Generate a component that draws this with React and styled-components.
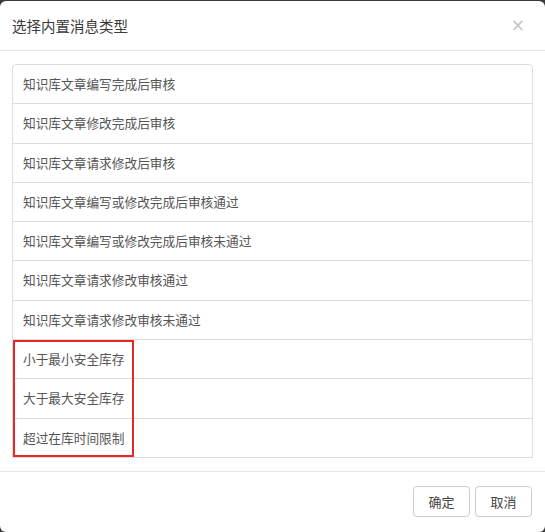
import React from "react";
import styled, { createGlobalStyle } from "styled-components";

const Global = createGlobalStyle`
  html, body { margin: 0; padding: 0; background: #3a3a3a; }
  body { font-family: "Noto Sans CJK SC", "Noto Sans", sans-serif; }
  * { box-sizing: border-box; }
`;

const Modal = styled.div`
  margin-top: 1px;
  width: 545px;
  height: 531px;
  background: #fff;
  border-radius: 6px;
  display: flex;
  flex-direction: column;
  overflow: hidden;
`;

const Header = styled.div`
  height: 50px;
  border-bottom: 1px solid #e5e5e5;
  display: flex;
  align-items: center;
  justify-content: space-between;
  padding: 0 20px 0 12px;
`;

const Title = styled.div`
  font-size: 14.5px;
  color: #3a3a3a;
  line-height: 20px;
`;

const Close = styled.button`
  border: 0;
  background: none;
  padding: 0;
  font-family: "DejaVu Sans", sans-serif;
  font-size: 17px;
  font-weight: normal;
  line-height: 1;
  color: #c4c4c4;
  cursor: pointer;
`;

const Body = styled.div`
  padding: 13px 12px 14px 12px;
`;

const List = styled.div`
  display: flex;
  flex-direction: column;
`;

const Item = styled.div`
  padding: 10px 10px;
  font-size: 12.7px;
  line-height: 18.3px;
  color: #555;
  background: #fff;
  border: 1px solid #ddd;
  margin-bottom: -1px;
  &:first-child { border-top-left-radius: 4px; border-top-right-radius: 4px; }
  &:last-child { border-bottom-left-radius: 4px; border-bottom-right-radius: 4px; margin-bottom: 0; }
`;

const Group = styled.div`
  position: relative;
  display: flex;
  flex-direction: column;
`;

const Mark = styled.div`
  position: absolute;
  left: 1px;
  top: 1px;
  width: ${(p) => p.$w}px;
  bottom: 0;
  border: 2px solid #e8272b;
  pointer-events: none;
`;

const Footer = styled.div`
  border-top: 1px solid #e5e5e5;
  padding: 14px 13px 0 13px;
  display: flex;
  justify-content: flex-end;
  gap: 5px;
`;

const Button = styled.button`
  width: 57px;
  height: 31px;
  border: 1px solid #ccc;
  border-radius: 4px;
  background: #fff;
  font-family: "Noto Sans CJK SC", sans-serif;
  font-size: 13px;
  color: #444;
  padding: 0;
`;

const items = [
  "知识库文章编写完成后审核",
  "知识库文章修改完成后审核",
  "知识库文章请求修改后审核",
  "知识库文章编写或修改完成后审核通过",
  "知识库文章编写或修改完成后审核未通过",
  "知识库文章请求修改审核通过",
  "知识库文章请求修改审核未通过",
];

const marked = ["小于最小安全库存", "大于最大安全库存", "超过在库时间限制"];

export default function App() {
  return (
    <>
      <Global />
      <Modal>
        <Header>
          <Title>选择内置消息类型</Title>
          <Close>×</Close>
        </Header>
        <Body>
          <List>
            {items.map((t) => (
              <Item key={t}>{t}</Item>
            ))}
            <Group>
              {marked.map((t) => (
                <Item key={t}>{t}</Item>
              ))}
              <Mark $w={121} />
            </Group>
          </List>
        </Body>
        <Footer>
          <Button>确定</Button>
          <Button>取消</Button>
        </Footer>
      </Modal>
    </>
  );
}
